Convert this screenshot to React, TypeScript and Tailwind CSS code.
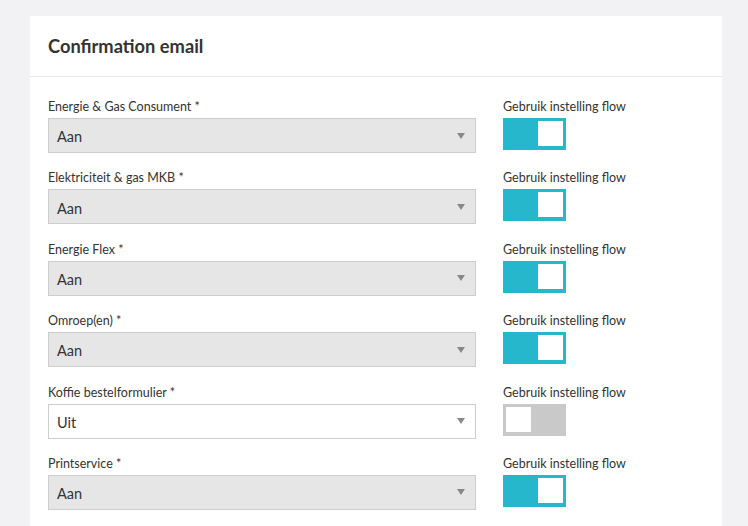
const rows = [
  { label: "Energie & Gas Consument *", value: "Aan", on: true },
  { label: "Elektriciteit & gas MKB *", value: "Aan", on: true },
  { label: "Energie Flex *", value: "Aan", on: true },
  { label: "Omroep(en) *", value: "Aan", on: true },
  { label: "Koffie bestelformulier *", value: "Uit", on: false },
  { label: "Printservice *", value: "Aan", on: true },
];

function Toggle({ on }: { on: boolean }) {
  return (
    <div
      className={
        on
          ? "flex h-[32px] w-[63px] items-start justify-end bg-[#27b7cc] p-[3px]"
          : "flex h-[32px] w-[63px] items-start justify-start bg-[#c9c9c9] p-[3px]"
      }
    >
      <div className="h-[25px] w-[25px] bg-white" />
    </div>
  );
}

export default function App() {
  return (
    <div className="min-h-[526px] bg-[#f2f2f4] px-[30px] pt-4 font-['Lato',sans-serif] text-[#333]">
      <div className="w-[692px] bg-white pb-10">
        <div className="flex h-[61px] items-center border-b border-[#e6e6e6] px-[18px] pt-[1px]">
          <h2 className="text-[18.3px] font-bold text-[#333]">Confirmation email</h2>
        </div>
        <div className="px-[18px] pt-[21px]">
          {rows.map((r) => (
            <div key={r.label} className="grid grid-cols-[428px_1fr] gap-x-[27px] pb-[16.4px]">
              <div>
                <div className="mb-[3px] text-[12.5px] leading-[17px]">{r.label}</div>
                <div
                  className={
                    r.on
                      ? "flex h-[35px] items-center justify-between border border-[#cdcdcd] bg-[#e6e6e6] pl-[8px] pr-[10px]"
                      : "flex h-[35px] items-center justify-between border border-[#cdcdcd] bg-white pl-[8px] pr-[10px]"
                  }
                >
                  <span className="pt-[3px] text-[14.5px]">{r.value}</span>
                  <svg width="8" height="6" viewBox="0 0 8 6">
                    <path d="M0 0h8L4 6z" fill="#888" />
                  </svg>
                </div>
              </div>
              <div>
                <div className="mb-[3px] text-[12.5px] leading-[17px]">Gebruik instelling flow</div>
                <Toggle on={r.on} />
              </div>
            </div>
          ))}
        </div>
      </div>
    </div>
  );
}
